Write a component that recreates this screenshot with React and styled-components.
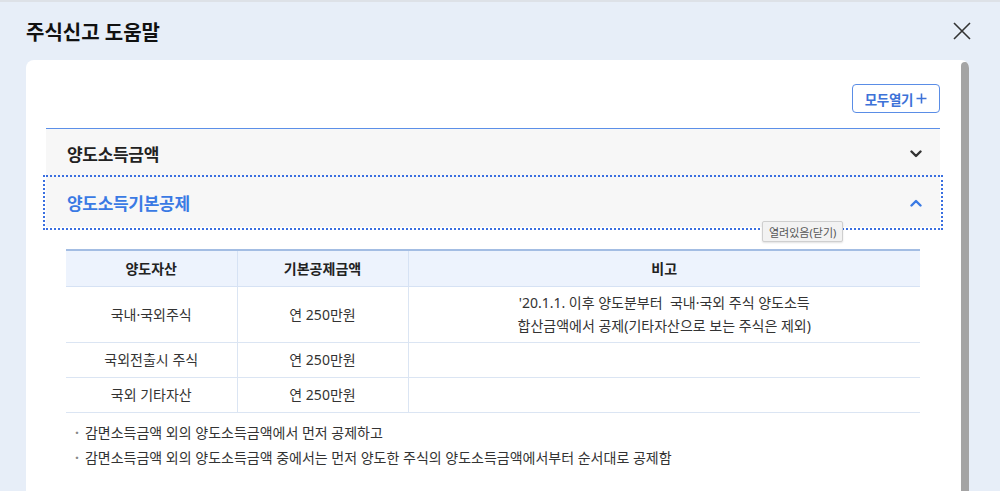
import React from "react";
import styled, { createGlobalStyle } from "styled-components";

const GlobalStyle = createGlobalStyle`
  html, body {
    margin: 0;
    padding: 0;
    background: #e7eef8;
  }
  body {
    font-family: "Noto Sans", "Noto Sans CJK KR", sans-serif;
    color: #222;
  }
  * { box-sizing: border-box; }
`;

const Dialog = styled.div`
  height: 491px;
  display: flex;
  flex-direction: column;
  border-top: 2px solid #dde1e7;
  overflow: hidden;
`;

const Header = styled.header`
  height: 58px;
  flex: none;
  display: flex;
  align-items: center;
  justify-content: space-between;
  padding: 0 28px 0 26px;
`;

const Title = styled.h1`
  margin: 0;
  font-size: 20px;
  font-weight: 700;
  color: #111;
`;

const CloseButton = styled.button`
  width: 20px;
  height: 20px;
  padding: 0;
  border: 0;
  background: none;
  display: flex;
  align-items: center;
  justify-content: center;
  cursor: pointer;
`;

const Card = styled.section`
  flex: 1;
  margin: 0 31px 0 26px;
  background: #fff;
  border-radius: 8px 8px 0 0;
  display: flex;
  overflow: hidden;
`;

const Body = styled.div`
  flex: 1;
  padding: 24px 21px 0 20px;
`;

const ScrollTrack = styled.div`
  width: 8px;
  flex: none;
  padding-top: 2px;
`;

const ScrollThumb = styled.div`
  height: 100%;
  background: #a4a4a4;
  border-radius: 4px 4px 0 0;
`;

const Toolbar = styled.div`
  display: flex;
  justify-content: flex-end;
  margin-bottom: 15px;
`;

const ExpandAllButton = styled.button`
  height: 29px;
  width: 88px;
  padding: 0;
  border: 1px solid #5a8de6;
  border-radius: 4px;
  background: #fff;
  color: #3d72d8;
  font-family: inherit;
  font-size: 13.5px;
  font-weight: 700;
  letter-spacing: -0.3px;
  display: flex;
  align-items: center;
  justify-content: center;
  gap: 3px;
`;

const Accordion = styled.div`
  border-top: 1px solid #5b8fe8;
`;

const Item = styled.div``;

const ItemHeader = styled.div`
  position: relative;
  height: 49px;
  background: #f7f7f7;
  display: flex;
  align-items: center;
  justify-content: space-between;
  padding: 0 18px 0 21px;
  outline: ${(p) => (p.$focused ? "2px dotted #3a6fe0" : "none")};
  outline-offset: 1px;
`;

const ItemTitle = styled.span`
  font-size: 17px;
  font-weight: 700;
  letter-spacing: -0.3px;
  color: ${(p) => (p.$open ? "#3a7ae4" : "#222")};
`;

const Tooltip = styled.span`
  position: absolute;
  left: 716px;
  top: 43px;
  height: 21px;
  padding: 0 6px;
  display: flex;
  align-items: center;
  background: #f2f2f2;
  border: 1px solid #cfcfcf;
  border-radius: 2px;
  box-shadow: 0 1px 2px rgba(0, 0, 0, 0.12);
  font-size: 11px;
  color: #555;
  white-space: nowrap;
  z-index: 2;
`;

const Panel = styled.div`
  padding: 22px 20px 0 20px;
`;

const Table = styled.table`
  width: 100%;
  border-collapse: collapse;
  table-layout: fixed;
  font-size: 14px;
  color: #333;
  border-top: 2px solid #a3bde3;
`;

const Th = styled.th`
  height: 36px;
  background: #edf3fd;
  font-weight: 700;
  color: #222;
  border-bottom: 1px solid #d6e2f4;
  border-left: 1px solid #d6e2f4;
  &:first-child { border-left: 0; }
`;

const Td = styled.td`
  height: ${(p) => (p.$tall ? "56px" : "35px")};
  text-align: center;
  line-height: 23px;
  border-bottom: 1px solid #dbe5f3;
  border-left: 1px solid #dbe5f3;
  &:first-child { border-left: 0; }
`;

const Notes = styled.ul`
  list-style: none;
  margin: 7px 0 0;
  padding: 0 0 0 9px;
  font-size: 14px;
  color: #333;
`;

const Note = styled.li`
  line-height: 25px;
  display: flex;
  gap: 6px;
  &::before {
    content: "·";
    color: #888;
    font-weight: 700;
  }
`;

const Chevron = ({ up, color }) => (
  <svg width="12" height="8" viewBox="0 0 12 8" fill="none">
    <path
      d={up ? "M1.5 6.5 L6 2 L10.5 6.5" : "M1.5 1.5 L6 6 L10.5 1.5"}
      stroke={color}
      strokeWidth="2.4"
      strokeLinecap="round"
      strokeLinejoin="round"
    />
  </svg>
);

const rows = [
  {
    asset: "국내·국외주식",
    amount: "연 250만원",
    note: [
      "'20.1.1. 이후 양도분부터\u00a0 국내·국외 주식 양도소득",
      "합산금액에서 공제(기타자산으로 보는 주식은 제외)",
    ],
  },
  { asset: "국외전출시 주식", amount: "연 250만원", note: [] },
  { asset: "국외 기타자산", amount: "연 250만원", note: [] },
];

export default function App() {
  return (
    <>
      <GlobalStyle />
      <Dialog>
        <Header>
          <Title>주식신고 도움말</Title>
          <CloseButton aria-label="닫기">
            <svg width="18" height="18" viewBox="0 0 18 18">
              <path d="M1 1 L17 17 M17 1 L1 17" stroke="#333" strokeWidth="1.6" />
            </svg>
          </CloseButton>
        </Header>
        <Card>
          <Body>
            <Toolbar>
              <ExpandAllButton>
                모두열기
                <svg width="11" height="11" viewBox="0 0 11 11">
                  <path d="M5.5 0.5 V10.5 M0.5 5.5 H10.5" stroke="#3d72d8" strokeWidth="1.6" />
                </svg>
              </ExpandAllButton>
            </Toolbar>
            <Accordion>
              <Item>
                <ItemHeader>
                  <ItemTitle>양도소득금액</ItemTitle>
                  <Chevron color="#333" />
                </ItemHeader>
              </Item>
              <Item>
                <ItemHeader $focused>
                  <ItemTitle $open>양도소득기본공제</ItemTitle>
                  <Chevron up color="#3a7ae4" />
                  <Tooltip>열려있음(닫기)</Tooltip>
                </ItemHeader>
                <Panel>
                  <Table>
                    <colgroup>
                      <col style={{ width: "171px" }} />
                      <col style={{ width: "171px" }} />
                      <col />
                    </colgroup>
                    <thead>
                      <tr>
                        <Th>양도자산</Th>
                        <Th>기본공제금액</Th>
                        <Th>비고</Th>
                      </tr>
                    </thead>
                    <tbody>
                      {rows.map((r, i) => (
                        <tr key={r.asset}>
                          <Td $tall={i === 0}>{r.asset}</Td>
                          <Td $tall={i === 0}>{r.amount}</Td>
                          <Td $tall={i === 0}>
                            {r.note.map((line) => (
                              <div key={line}>{line}</div>
                            ))}
                          </Td>
                        </tr>
                      ))}
                    </tbody>
                  </Table>
                  <Notes>
                    <Note>감면소득금액 외의 양도소득금액에서 먼저 공제하고</Note>
                    <Note>감면소득금액 외의 양도소득금액 중에서는 먼저 양도한 주식의 양도소득금액에서부터 순서대로 공제함</Note>
                  </Notes>
                </Panel>
              </Item>
            </Accordion>
          </Body>
          <ScrollTrack>
            <ScrollThumb />
          </ScrollTrack>
        </Card>
      </Dialog>
    </>
  );
}
